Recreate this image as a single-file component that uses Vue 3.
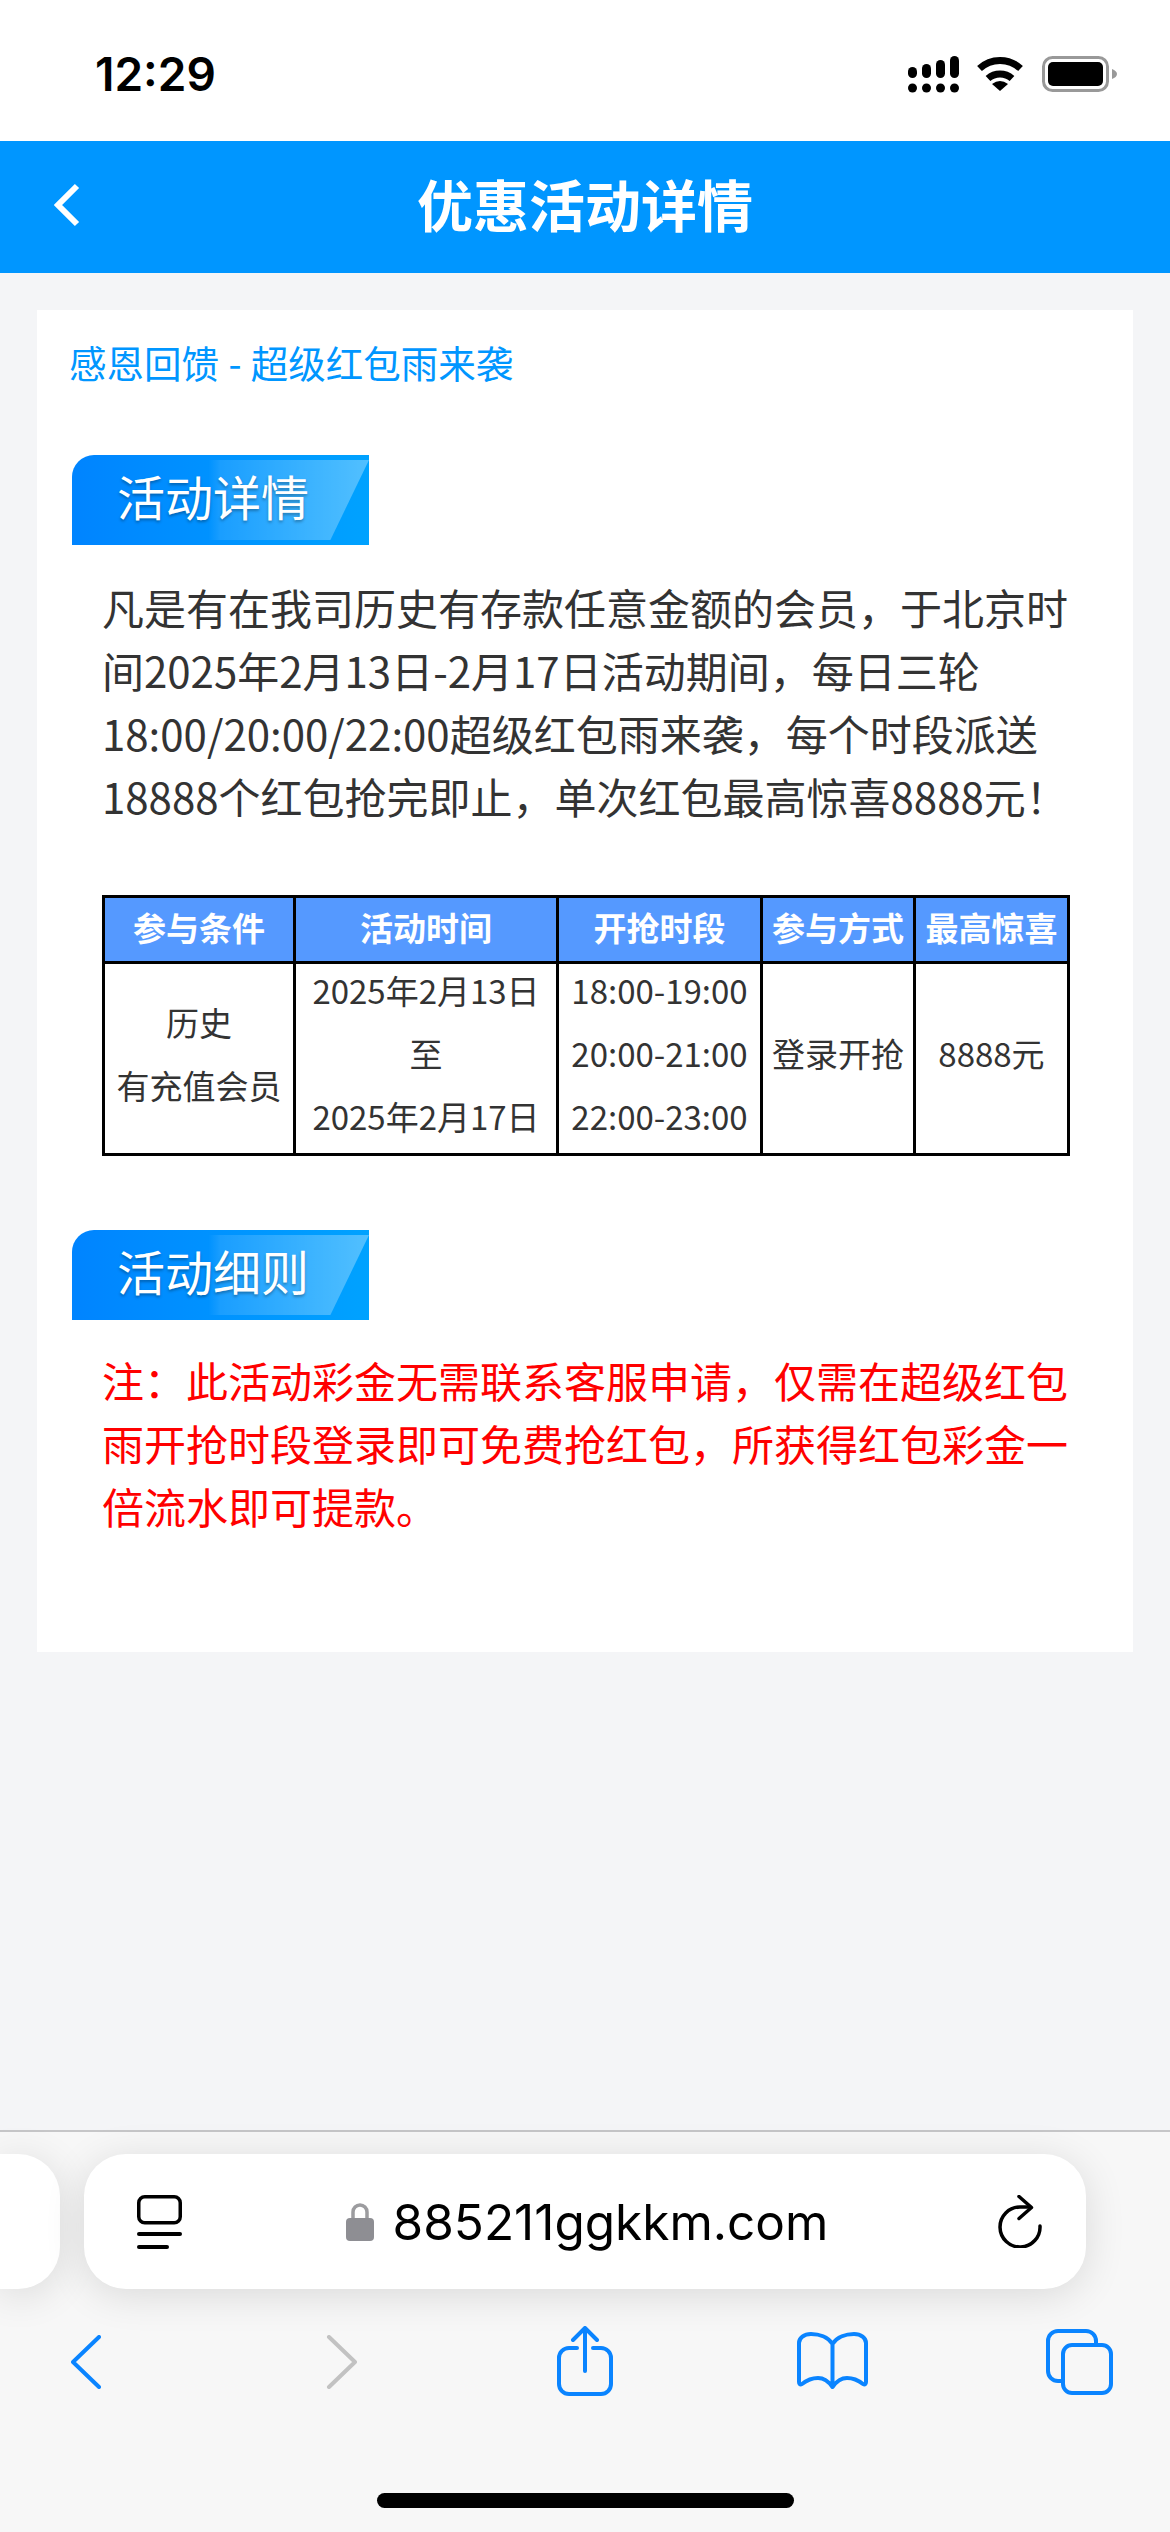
<template>
  <div class="page">
    <div class="status-bar">
      <span class="time">12:29</span>
      <div class="status-icons">
        <svg width="51" height="37" viewBox="0 0 51 37">
          <rect x="0" y="11" width="9" height="11" rx="4.5" />
          <rect x="14" y="8" width="9" height="14" rx="4.5" />
          <rect x="28" y="4" width="9" height="18" rx="4.5" />
          <rect x="42" y="0" width="9" height="22" rx="4.5" />
          <circle cx="4.5" cy="32" r="4.5" />
          <circle cx="18.5" cy="32" r="4.5" />
          <circle cx="32.5" cy="32" r="4.5" />
          <circle cx="46.5" cy="32" r="4.5" />
        </svg>
        <svg class="wifi" width="48" height="36" viewBox="0 0 48 36">
          <path d="M3.5 13.5A30 30 0 0 1 44.5 13.5" fill="none" stroke="#000" stroke-width="7" />
          <path d="M12 23.5A18 18 0 0 1 36 23.5" fill="none" stroke="#000" stroke-width="7" />
          <path d="M16 29Q24 23 32 29L24 36Z" />
        </svg>
        <svg class="battery" width="75" height="36" viewBox="0 0 75 36">
          <rect x="1.5" y="1.5" width="64" height="33" rx="9" fill="none" stroke="#999" stroke-width="3" />
          <rect x="6" y="6" width="55" height="24" rx="5" />
          <path d="M70 13c3 1 5 3 5 5s-2 4-5 5z" fill="#999" />
        </svg>
      </div>
    </div>

    <header class="nav">
      <svg class="nav-back" width="26" height="44" viewBox="0 0 26 44">
        <path d="M23 3L4 22L23 41" fill="none" stroke="#fff" stroke-width="6" />
      </svg>
      <h1>优惠活动详情</h1>
    </header>

    <main class="main">
      <section class="card">
        <div class="promo-title">感恩回馈 - 超级红包雨来袭</div>

        <div class="banner"><span>活动详情</span></div>
        <p class="text">
          凡是有在我司历史有存款任意金额的会员，于北京时<br />间2025年2月13日-2月17日活动期间，每日三轮<br />18:00/20:00/22:00超级红包雨来袭，每个时段派送<br />18888个红包抢完即止，单次红包最高惊喜8888元！
        </p>

        <table class="rules">
          <colgroup>
            <col v-for="w in colWidths" :key="w" :style="{ width: w + 'px' }" />
          </colgroup>
          <thead>
            <tr>
              <th v-for="h in headers" :key="h">{{ h }}</th>
            </tr>
          </thead>
          <tbody>
            <tr>
              <td><div class="cell">历史<br />有充值会员</div></td>
              <td><div class="cell">2025年2月13日<br />至<br />2025年2月17日</div></td>
              <td><div class="cell">18:00-19:00<br />20:00-21:00<br />22:00-23:00</div></td>
              <td><div class="cell">登录开抢</div></td>
              <td><div class="cell">8888元</div></td>
            </tr>
          </tbody>
        </table>

        <div class="banner banner-second"><span>活动细则</span></div>
        <p class="text note">
          注：此活动彩金无需联系客服申请，仅需在超级红包<br />雨开抢时段登录即可免费抢红包，所获得红包彩金一<br />倍流水即可提款。
        </p>
      </section>
    </main>

    <footer class="chrome">
      <div class="url-row">
        <div class="tab-peek"></div>
        <div class="url-bar">
          <svg width="45" height="54" viewBox="0 0 45 54" fill="none" stroke="#000">
            <rect x="1.75" y="1.75" width="41.5" height="26" rx="6" stroke-width="3.5" />
            <path d="M2 39H43" stroke-width="4" stroke-linecap="round" />
            <path d="M2 52H30" stroke-width="4" stroke-linecap="round" />
          </svg>
          <div class="address">
            <svg width="28" height="39" viewBox="0 0 28 39">
              <path d="M7 18V10a7 7 0 0 1 14 0v8" fill="none" stroke="#9c9c9f" stroke-width="3.5" />
              <rect x="0" y="16" width="28" height="23" rx="4" fill="#8e8e93" />
            </svg>
            <span>885211ggkkm.com</span>
          </div>
          <svg width="44" height="53" viewBox="0 0 44 53" fill="none" stroke="#000" stroke-width="3.5">
            <path d="M42 31A20 20 0 1 1 22 12H32" stroke-linecap="round" />
            <path d="M21 1.5L33.5 12.5L21 23.5" stroke-linecap="round" stroke-linejoin="round" />
          </svg>
        </div>
      </div>

      <div class="toolbar">
        <svg class="tb-back" width="30" height="54" viewBox="0 0 30 54" fill="none" stroke="#0a84ff" stroke-width="4" stroke-linecap="round" stroke-linejoin="round">
          <path d="M28 2L2 27L28 52" />
        </svg>
        <svg class="tb-forward" width="31" height="54" viewBox="0 0 31 54" fill="none" stroke="#c2c2c2" stroke-width="4" stroke-linecap="round" stroke-linejoin="round">
          <path d="M3 2L29 27L3 52" />
        </svg>
        <svg class="tb-share" width="56" height="70" viewBox="0 0 56 70" fill="none" stroke="#0a84ff" stroke-width="4" stroke-linecap="round" stroke-linejoin="round">
          <path d="M20 22H12a10 10 0 0 0-10 10v26a10 10 0 0 0 10 10h32a10 10 0 0 0 10-10V32a10 10 0 0 0-10-10h-8" />
          <path d="M28 3V45" />
          <path d="M16 14L28 2L40 14" />
        </svg>
        <svg class="tb-book" width="71" height="59" viewBox="0 0 71 59" fill="none" stroke="#0a84ff" stroke-width="4" stroke-linecap="round" stroke-linejoin="round">
          <path d="M35.5 12C31 5 22 2 14 2C7 2 2 6 2 11V50c0 2 1 3 3 2C10 48 16 46 21 46C27 46 32 50 35.5 55C39 50 44 46 50 46C55 46 61 48 66 52c2 1 3 0 3-2V11C69 6 64 2 57 2C49 2 40 5 35.5 12V55" />
        </svg>
        <svg class="tb-tabs" width="67" height="66" viewBox="0 0 67 66" fill="none" stroke="#0a84ff" stroke-width="4">
          <path d="M15 52H12a10 10 0 0 1-10-10V12A10 10 0 0 1 12 2h28a10 10 0 0 1 10 10v2" />
          <rect x="17" y="16" width="48" height="48" rx="9" />
        </svg>
      </div>

      <div class="home-bar"></div>
    </footer>
  </div>
</template>

<script setup>
const headers = ['参与条件', '活动时间', '开抢时段', '参与方式', '最高惊喜']
const colWidths = [191, 263, 204, 153, 154]
</script>

<style scoped>
.page {
  width: 1170px;
  height: 2532px;
  display: flex;
  flex-direction: column;
  background: #f4f5f7;
  font-family: "Noto Sans CJK SC", "Noto Sans", sans-serif;
  overflow: hidden;
}

.status-bar {
  height: 141px;
  background: #fff;
  display: flex;
  align-items: flex-start;
  justify-content: space-between;
  padding: 0 53px 0 95px;
  box-sizing: border-box;
}

.time {
  font-family: Inter, "Liberation Sans", sans-serif;
  font-size: 46px;
  font-weight: 600;
  line-height: 56px;
  margin-top: 46px;
  color: #000;
}

.status-icons {
  display: flex;
  align-items: flex-start;
  margin-top: 55px;
}

.status-icons svg:first-child {
  margin-top: 1px;
}

.wifi {
  margin-left: 17px;
}

.battery {
  margin-left: 18px;
  margin-top: 1px;
}

.nav {
  position: relative;
  height: 132px;
  background: #0096ff;
  display: flex;
  align-items: center;
  justify-content: center;
}

.nav h1 {
  margin: 0 0 8px;
  color: #fff;
  font-size: 56px;
  font-weight: 700;
  line-height: 1;
}

.nav-back {
  position: absolute;
  left: 54px;
  top: 42px;
}

.main {
  flex: 1;
  padding: 37px 37px 0;
}

.card {
  height: 1342px;
  background: #fff;
  padding: 29px 0 0 32px;
  box-sizing: border-box;
}

.promo-title {
  color: #0096ff;
  font-size: 37.5px;
  word-spacing: 1px;
  line-height: 46px;
}

.banner {
  position: relative;
  width: 297px;
  height: 90px;
  margin: 70px 0 0 3px;
  border-radius: 22px 0 0 0;
  background: linear-gradient(90deg, #0084ff, #00a2ff);
  overflow: hidden;
}

.banner::before {
  content: "";
  position: absolute;
  inset: 5px 0 5px 0;
  background: linear-gradient(90deg, rgba(255, 255, 255, 0) 46%, rgba(255, 255, 255, 0.1) 50%, rgba(255, 255, 255, 0.32) 100%);
  clip-path: polygon(0 0, 100% 0, 87% 100%, 0 100%);
}

.banner span {
  position: relative;
  display: block;
  padding-left: 45px;
  color: #fff;
  font-size: 48px;
  line-height: 80px;
  text-shadow: 0 2px 3px rgba(0, 0, 0, 0.3);
}

.banner-second {
  margin-top: 74px;
}

.text {
  width: 980px;
  margin: 30px 0 0 33px;
  color: #333;
  font-size: 42px;
  line-height: 63px;
}

.note {
  color: #f00;
  font-weight: 400;
  margin-top: 28px;
}

.rules {
  width: 965px;
  margin: 68px 0 0 33px;
  border-collapse: collapse;
  table-layout: fixed;
  border: 3px solid #000;
  font-size: 33px;
}

.rules th,
.rules td {
  border: 3px solid #000;
  padding: 0;
  text-align: center;
  white-space: nowrap;
}

.rules th {
  height: 66px;
  padding-bottom: 5px;
  box-sizing: border-box;
  background: #5599ff;
  color: #fff;
  font-weight: 700;
  line-height: 52px;
}

.rules td {
  color: #333;
  line-height: 63px;
}

.cell {
  margin: -5px 0 5px;
}

.chrome {
  height: 402px;
  border-top: 2px solid #c6c6c8;
  background: #f7f7f7;
  box-sizing: border-box;
}

.url-row {
  display: flex;
  gap: 24px;
  margin-top: 22px;
  height: 135px;
}

.tab-peek {
  width: 60px;
  background: #fff;
  border-radius: 0 42px 42px 0;
  box-shadow: 0 6px 40px rgba(0, 0, 0, 0.12);
}

.url-bar {
  width: 1002px;
  background: #fff;
  border-radius: 42px;
  box-shadow: 0 6px 40px rgba(0, 0, 0, 0.12);
  display: flex;
  align-items: center;
  justify-content: space-between;
  padding: 0 44px 0 53px;
  box-sizing: border-box;
}

.address {
  display: flex;
  align-items: center;
  gap: 19px;
  margin-right: 6px;
  color: #000;
  font-family: Inter, "Liberation Sans", sans-serif;
  font-size: 49.5px;
  line-height: 60px;
}

.toolbar {
  display: flex;
  align-items: center;
  height: 70px;
  margin-top: 38px;
  padding-left: 71px;
}

.tb-forward {
  margin-left: 225px;
}

.tb-share {
  margin-left: 200px;
  margin-top: -3px;
}

.tb-book {
  margin-left: 184px;
  margin-top: -1px;
}

.tb-tabs {
  margin-left: 178px;
}

.home-bar {
  width: 417px;
  height: 15px;
  margin: 96px auto 0;
  background: #000;
  border-radius: 8px;
}
</style>
